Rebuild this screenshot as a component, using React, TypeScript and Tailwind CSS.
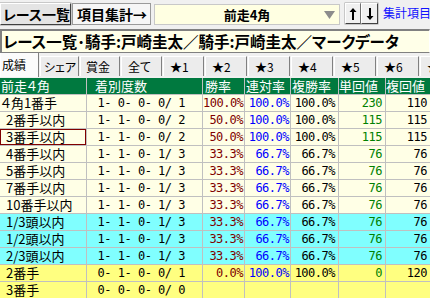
import React from "react";

type Row = {
  name: string;
  pl: string;
  rec: string;
  w: string;
  r: string;
  f: string;
  t: string;
  fk: string;
  bg: string;
  sel?: boolean;
};

const C = "bg-[#ffffe6]";
const CY = "bg-[#80ffff]";
const Y = "bg-[#ffff80]";

const rows: Row[] = [
  { name: "４角1番手", pl: "pl-[1px]", rec: "1- 0- 0- 0/ 1", w: "100.0%", r: "100.0%", f: "100.0%", t: "230", fk: "110", bg: C },
  { name: "2番手以内", pl: "pl-[6px]", rec: "1- 1- 0- 0/ 2", w: "50.0%", r: "100.0%", f: "100.0%", t: "115", fk: "115", bg: C },
  { name: "3番手以内", pl: "pl-[6px]", rec: "1- 1- 0- 0/ 2", w: "50.0%", r: "100.0%", f: "100.0%", t: "115", fk: "115", bg: C, sel: true },
  { name: "4番手以内", pl: "pl-[6px]", rec: "1- 1- 0- 1/ 3", w: "33.3%", r: "66.7%", f: "66.7%", t: "76", fk: "76", bg: C },
  { name: "5番手以内", pl: "pl-[6px]", rec: "1- 1- 0- 1/ 3", w: "33.3%", r: "66.7%", f: "66.7%", t: "76", fk: "76", bg: C },
  { name: "7番手以内", pl: "pl-[6px]", rec: "1- 1- 0- 1/ 3", w: "33.3%", r: "66.7%", f: "66.7%", t: "76", fk: "76", bg: C },
  { name: "10番手以内", pl: "pl-[6px]", rec: "1- 1- 0- 1/ 3", w: "33.3%", r: "66.7%", f: "66.7%", t: "76", fk: "76", bg: C },
  { name: "1/3頭以内", pl: "pl-[6px]", rec: "1- 1- 0- 1/ 3", w: "33.3%", r: "66.7%", f: "66.7%", t: "76", fk: "76", bg: CY },
  { name: "1/2頭以内", pl: "pl-[6px]", rec: "1- 1- 0- 1/ 3", w: "33.3%", r: "66.7%", f: "66.7%", t: "76", fk: "76", bg: CY },
  { name: "2/3頭以内", pl: "pl-[6px]", rec: "1- 1- 0- 1/ 3", w: "33.3%", r: "66.7%", f: "66.7%", t: "76", fk: "76", bg: CY },
  { name: "2番手", pl: "pl-[6px]", rec: "0- 1- 0- 0/ 1", w: "0.0%", r: "100.0%", f: "100.0%", t: "0", fk: "120", bg: Y },
  { name: "3番手", pl: "pl-[6px]", rec: "0- 0- 0- 0/ 0", w: "", r: "", f: "", t: "", fk: "", bg: Y },
];

const JP = "font-['Noto_Sans_CJK_JP',sans-serif]";
const MONO = "font-['DejaVu_Sans_Mono','Noto_Sans_CJK_JP',monospace] text-[12px] tracking-[-0.5px]";
const cell = "h-[17px] border-r border-b border-[#c0c0c0] overflow-hidden whitespace-pre leading-[16px]";

const tabs = [
  { t: "シェア", w: "w-[39px]", p: "pl-[3px]" },
  { t: "賞金", w: "w-[40px]", p: "pl-[5px]" },
  { t: "全て", w: "w-[41px]", p: "pl-[6px]" },
  { t: "★1", w: "w-[41px]", p: "pl-[6px]" },
  { t: "★2", w: "w-[42px]", p: "pl-[6px]" },
  { t: "★3", w: "w-[42px]", p: "pl-[6px]" },
  { t: "★4", w: "w-[42px]", p: "pl-[6px]" },
  { t: "★5", w: "w-[42px]", p: "pl-[6px]" },
  { t: "★6", w: "w-[42px]", p: "pl-[6px]" },
  { t: "★7", w: "w-[42px]", p: "pl-[6px]" },
];

const btn3d = "border border-t-white border-l-white border-r-[#404040] border-b-[#404040] shadow-[0_0_0_0.5px_#a0a0a0]";

export default function App() {
  return (
    <div className={`w-[430px] h-[298px] overflow-hidden bg-[#f0f0f0] ${JP} [font-feature-settings:'palt']`}>
      {/* top bar */}
      <div className="h-[28px] flex items-start whitespace-nowrap">
        <div className={`shrink-0 mt-[3px] w-[71px] h-[22px] bg-[#e4e4e4] ${btn3d} flex items-center pl-[2px] text-[14px] font-bold leading-none text-black`}>
          レース一覧
        </div>
        <div className="shrink-0 ml-[1px] mt-[3px] w-[79px] h-[22px] bg-[#f6f6f6] border border-[#9a9a9a] flex items-center pl-[4px] text-[14px] font-bold leading-none text-black">
          項目集計→
        </div>
        <div className="shrink-0 ml-[3px] mt-[4px] w-[186px] h-[21px] bg-[#ffffe2] border border-[#c8c8c8] relative flex items-center justify-center">
          <span className="text-[13px] font-bold leading-none text-black">前走4角</span>
          <svg className="absolute right-[4px] top-[6px]" width="11" height="8" viewBox="0 0 11 8">
            <polygon points="0,0 11,0 5.5,8" fill="#8c8c8c" />
          </svg>
        </div>
        <div className={`shrink-0 ml-[5px] mt-[3px] w-[16px] h-[21px] bg-[#f0f0f0] ${btn3d} flex items-center justify-center`}>
          <svg width="8" height="14" viewBox="0 0 8 14">
            <path d="M4 1 L7.5 5 L5 5 L5 13 L3 13 L3 5 L0.5 5 Z" fill="#000" />
          </svg>
        </div>
        <div className={`shrink-0 mt-[3px] w-[17px] h-[21px] bg-[#f0f0f0] ${btn3d} flex items-center justify-center`}>
          <svg width="8" height="14" viewBox="0 0 8 14">
            <path d="M4 13 L7.5 9 L5 9 L5 1 L3 1 L3 9 L0.5 9 Z" fill="#000" />
          </svg>
        </div>
        <div className="shrink-0 ml-[5px] mt-[7px] text-[12px] leading-none text-[#1010ff]">集計項目</div>
      </div>

      {/* info box */}
      <div className="mt-[1px] h-[24px] bg-[#ffffe8] border-t-2 border-l-2 border-t-[#808080] border-l-[#808080] border-b border-b-[#808080] border-r border-r-white flex items-center pl-[1px] text-[15.5px] font-bold leading-none text-black whitespace-nowrap overflow-hidden">
        レース一覧･騎手:戸崎圭太／騎手:戸崎圭太／マークデータ
      </div>

      {/* tabs */}
      <div className="h-[25px] flex items-start text-[12px] leading-none text-black overflow-hidden whitespace-nowrap">
        <div className="shrink-0 w-[39px] h-[25px] -mt-[1px] bg-[#fbfbfb] border-t border-l border-white border-r border-r-[#808080] flex items-center pl-[1px] z-10">
          成績
        </div>
        {tabs.map((t) => (
          <div
            key={t.t}
            className={`${t.w} ${t.p} shrink-0 h-[20px] mt-[3px] ml-[1px] bg-[#ececec] border-t border-l border-white border-r border-r-[#808080] flex items-center`}
          >
            {t.t}
          </div>
        ))}
      </div>

      {/* table */}
      <div className="grid grid-cols-[87px_116px_42px_46px_48px_47px_46px] text-[13px] whitespace-nowrap">
        {[
          { t: "前走４角", p: "pl-[1px]" },
          { t: "着別度数", p: "pl-[8px]" },
          { t: "勝率", p: "pl-[2px]" },
          { t: "連対率", p: "pl-[1px]" },
          { t: "複勝率", p: "pl-[1px]" },
          { t: "単回値", p: "pl-0" },
          { t: "複回値", p: "pl-0" },
        ].map((h) => (
          <div key={h.t} className={`${cell} ${h.p} bg-[#00793f] text-white`}>
            {h.t}
          </div>
        ))}
        {rows.map((r) => (
          <React.Fragment key={r.name}>
            <div className={`${cell} ${r.pl} ${r.bg} text-black ${r.sel ? "shadow-[inset_0_0_0_1px_#800000]" : ""}`}>{r.name}</div>
            <div className={`${cell} ${r.bg} ${MONO} text-black text-right pr-[17px]`}>{r.rec}</div>
            <div className={`${cell} ${r.bg} ${MONO} text-[#800000] text-right pr-[1px]`}>{r.w}</div>
            <div className={`${cell} ${r.bg} ${MONO} text-[#0000ff] text-right pr-[1px]`}>{r.r}</div>
            <div className={`${cell} ${r.bg} ${MONO} text-black text-right pr-[3px]`}>{r.f}</div>
            <div className={`${cell} ${r.bg} ${MONO} text-[#008000] text-right pr-[3px]`}>{r.t}</div>
            <div className={`${cell} ${r.bg} ${MONO} text-black text-right pr-[4px]`}>{r.fk}</div>
          </React.Fragment>
        ))}
      </div>
    </div>
  );
}
